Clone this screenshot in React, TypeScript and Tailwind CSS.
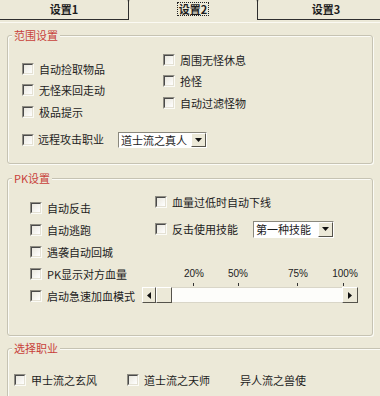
import React from "react";

function Check() {
  return (
    <span className="block w-[12px] h-[12px] shrink-0 border border-t-[#8e8c82] border-l-[#8e8c82] border-b-[#fbfbf6] border-r-[#fbfbf6]">
      <span className="block w-full h-full border border-t-[#4a4a4a] border-l-[#4a4a4a] border-b-[#e4e1d4] border-r-[#e4e1d4] bg-gradient-to-br from-[#e9e7dd] to-white" />
    </span>
  );
}

function DownBtn() {
  return (
    <span className="flex items-center justify-center w-[15px] h-full bg-[#ECE9D8] border border-t-white border-l-white border-b-[#55534b] border-r-[#55534b]">
      <svg width="7" height="4" viewBox="0 0 7 4">
        <path d="M0 0H7L3.5 4Z" fill="#111" />
      </svg>
    </span>
  );
}

function Legend({ children }: { children: React.ReactNode }) {
  return (
    <span className="absolute left-[4px] -top-[8px] px-[2px] leading-[14px] bg-[#ECE9D8] text-[#c8413a]">
      {children}
    </span>
  );
}

export default function App() {
  return (
    <div className="w-[380px] h-[396px] overflow-hidden bg-[#ECE9D8] text-[11px] text-[#1c1c1c] font-['Noto_Sans_CJK_SC','Liberation_Sans',sans-serif]">
      {/* Tabs */}
      <div className="flex h-[20px]">
        <div className="-mt-[4px] h-[24px] w-[129px] shrink-0 border-t border-r border-b border-[#2e2e2e] rounded-tr-[6px] flex justify-center pt-[5px] font-bold leading-[14px]">
          设置1
        </div>
        <div className="-mt-[4px] -ml-px h-[24px] w-[130px] shrink-0 border-t border-l border-r border-[#2e2e2e] rounded-t-[6px] flex justify-center pt-[5px] font-bold">
          <span className="h-[14px] leading-[12px] px-[1px] border border-dotted border-[#222]">设置2</span>
        </div>
        <div className="-mt-[4px] -ml-px h-[24px] w-[137px] shrink-0 border-t border-l border-b border-[#2e2e2e] rounded-tl-[6px] flex justify-center pt-[5px] font-bold leading-[14px]">
          设置3
        </div>
      </div>
      <div className="h-px mt-[2px] bg-[#fbfaf3]" />

      <div className="pl-[7px]">
        {/* 范围设置 */}
        <div className="relative mt-[12px] w-[366px] h-[129px] border border-[#c6c3b3] rounded-[3px] shadow-[inset_1px_1px_0_#fbfbf6,1px_1px_0_#fbfbf6]">
          <Legend>范围设置</Legend>
          <div className="flex pl-[14px]">
            <div className="w-[141px] shrink-0 pt-[22px] flex flex-col">
              <div className="flex items-center h-[21.5px] gap-[5px]"><Check />自动捡取物品</div>
              <div className="flex items-center h-[21.5px] gap-[5px]"><Check />无怪来回走动</div>
              <div className="flex items-center h-[21.5px] gap-[5px]"><Check />极品提示</div>
            </div>
            <div className="pt-[13px] flex flex-col">
              <div className="flex items-center h-[21.5px] gap-[5px]"><Check />周围无怪休息</div>
              <div className="flex items-center h-[21.5px] gap-[5px]"><Check />抢怪</div>
              <div className="flex items-center h-[21.5px] gap-[5px]"><Check />自动过滤怪物</div>
            </div>
          </div>
          <div className="flex items-center h-[22px] pl-[14px] mt-[6px]">
            <Check />
            <span className="w-[84px] pl-[4px]">远程攻击职业</span>
            <div className="flex h-[16px] w-[89px] border border-t-[#8a887d] border-l-[#8a887d] border-b-white border-r-white bg-white">
              <span className="flex-1 pl-[2px] leading-[14px] whitespace-nowrap overflow-hidden">道士流之真人</span>
              <DownBtn />
            </div>
          </div>
        </div>

        {/* PK设置 */}
        <div className="relative mt-[14px] w-[366px] h-[158px] border border-[#c6c3b3] rounded-[3px] shadow-[inset_1px_1px_0_#fbfbf6,1px_1px_0_#fbfbf6]">
          <Legend>PK设置</Legend>
          <div className="flex">
            <div className="w-[147px] shrink-0 pl-[22px] pt-[18px] flex flex-col">
              <div className="flex items-center h-[22px] gap-[5px]"><Check />自动反击</div>
              <div className="flex items-center h-[22px] gap-[5px]"><Check />自动逃跑</div>
              <div className="flex items-center h-[22px] gap-[5px]"><Check />遇袭自动回城</div>
            </div>
            <div className="pt-[12px] flex flex-col gap-[5px]">
              <div className="flex items-center h-[22px] gap-[5px]"><Check />血量过低时自动下线</div>
              <div className="flex items-center h-[22px]">
                <Check />
                <span className="w-[86px] pl-[5px]">反击使用技能</span>
                <div className="flex h-[17px] w-[81px] border border-t-[#8a887d] border-l-[#8a887d] border-b-white border-r-white bg-white">
                  <span className="flex-1 pl-[2px] leading-[15px] whitespace-nowrap overflow-hidden">第一种技能</span>
                  <DownBtn />
                </div>
              </div>
            </div>
          </div>
          <div className="flex">
            <div className="w-[134px] shrink-0 pl-[22px] flex flex-col">
              <div className="flex items-center h-[22px] gap-[5px]"><Check />PK显示对方血量</div>
              <div className="flex items-center h-[22px] gap-[5px]"><Check />启动急速加血模式</div>
            </div>
            <div className="w-[216px] shrink-0">
              <div className="relative h-[24px] text-[10px] font-['Liberation_Sans',sans-serif] text-[#222]">
                <span className="absolute left-[52px] top-[5px] -translate-x-1/2 leading-[12px]">20%</span>
                <span className="absolute left-[96px] top-[5px] -translate-x-1/2 leading-[12px]">50%</span>
                <span className="absolute left-[156px] top-[5px] -translate-x-1/2 leading-[12px]">75%</span>
                <span className="absolute left-[203px] top-[5px] -translate-x-1/2 leading-[12px]">100%</span>
                <span className="absolute left-[51px] bottom-[1px] w-px h-[3px] bg-[#333]" />
                <span className="absolute left-[96px] bottom-[1px] w-px h-[3px] bg-[#333]" />
                <span className="absolute left-[155px] bottom-[1px] w-px h-[3px] bg-[#333]" />
                <span className="absolute left-[201px] bottom-[1px] w-px h-[3px] bg-[#333]" />
              </div>
              <div className="flex h-[16px]">
                <span className="flex items-center justify-center w-[14px] h-full bg-[#ECE9D8] border border-t-white border-l-white border-b-[#55534b] border-r-[#55534b]">
                  <svg width="4" height="7" viewBox="0 0 4 7"><path d="M4 0V7L0 3.5Z" fill="#111" /></svg>
                </span>
                <span className="w-[16px] h-full bg-[#ECE9D8] border border-t-white border-l-white border-b-[#55534b] border-r-[#55534b]" />
                <span className="flex-1 h-full bg-[#fdfdfa] border-t border-b border-[#d9d6c8]" />
                <span className="flex items-center justify-center w-[16px] h-full bg-[#ECE9D8] border border-t-white border-l-white border-b-[#55534b] border-r-[#55534b]">
                  <svg width="4" height="7" viewBox="0 0 4 7"><path d="M0 0V7L4 3.5Z" fill="#111" /></svg>
                </span>
              </div>
            </div>
          </div>
        </div>

        {/* 选择职业 */}
        <div className="relative mt-[12px] w-[390px] h-[70px] border border-[#c6c3b3] rounded-[3px] shadow-[inset_1px_1px_0_#fbfbf6,1px_1px_0_#fbfbf6]">
          <Legend>选择职业</Legend>
          <div className="flex items-center h-[22px] mt-[20px] pl-[6px]">
            <div className="w-[113px] shrink-0 flex items-center gap-[5px]"><Check />甲士流之玄风</div>
            <div className="w-[113px] shrink-0 flex items-center gap-[5px]"><Check />道士流之天师</div>
            <span>异人流之兽使</span>
          </div>
        </div>
      </div>
    </div>
  );
}
